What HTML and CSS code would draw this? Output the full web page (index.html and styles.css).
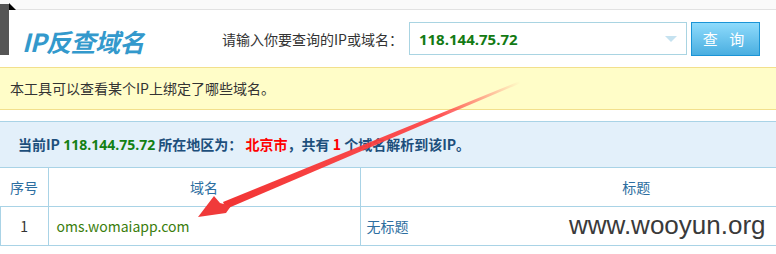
FILE: index.html
```html
<!DOCTYPE html>
<html lang="zh-CN">
<head>
    <meta charset="UTF-8">
    <title>IP反查域名</title>
    <link rel="stylesheet" href="styles.css">
</head>
<body>

    <div class="corner">
        <svg width="18" height="56" viewBox="0 0 18 56">
            <rect x="0" y="4" width="9" height="51" fill="#555"/>
            <polygon points="9,3 9,10 16,10" fill="#000"/>
        </svg>
    </div>

    <div class="topline"></div>

    <div class="header">
        <h1 class="logo">IP反查域名</h1>
        <label class="label">请输入你要查询的IP或域名：</label>
        <div class="search">
            <span class="search-value">118.144.75.72</span>
            <span class="caret"></span>
        </div>
        <button class="btn-query">查 询</button>
    </div>

    <div class="notice">本工具可以查看某个IP上绑定了哪些域名。</div>

    <div class="info">
        当前IP <span class="green">118.144.75.72</span> 所在地区为： <span class="red">北京市</span>，共有 <span class="red">1</span> 个域名解析到该IP。
    </div>

    <table class="result">
        <tr>
            <th class="col-no">序号</th>
            <th class="col-domain">域名</th>
            <th class="col-title">标题</th>
        </tr>
        <tr>
            <td class="num">1</td>
            <td class="domain">oms.womaiapp.com</td>
            <td class="title">无标题</td>
        </tr>
    </table>

    <!-- 截图上的标注箭头 -->
    <svg class="arrow" width="776" height="254" viewBox="0 0 776 254">
        <defs>
            <linearGradient id="fade" x1="520" y1="82" x2="200" y2="216" gradientUnits="userSpaceOnUse">
                <stop offset="0" stop-color="#ff4040" stop-opacity="0"/>
                <stop offset="0.25" stop-color="#ff4040" stop-opacity="0.9"/>
                <stop offset="1" stop-color="#f03030"/>
            </linearGradient>
        </defs>
        <polygon points="520,81 521,83 226,209 223,202" fill="url(#fade)"/>
        <polygon points="198,217 214,196 220,203 231,206 226,213" fill="#f03a3a"/>
    </svg>

    <div class="watermark">www.wooyun.org</div>

</body>
</html>
```

FILE: styles.css
```css
body {
    margin: 0;
    width: 776px;
    height: 254px;
    overflow: hidden;
    position: relative;
    background: #fff;
    font-family: "Microsoft YaHei", "Noto Sans CJK SC", sans-serif;
    color: #333;
}

.corner {
    position: absolute;
    left: 0;
    top: 0;
}

.topline {
    height: 9px;
    border-bottom: 1px solid #e2e2e2;
    background: #fafafa;
}

.header {
    display: flex;
    align-items: center;
    height: 57px;
    padding-left: 22px;
}

.logo {
    margin: 0;
    width: 200px;
    font-size: 25px;
    font-style: italic;
    font-weight: bold;
    color: #3399cc;
    letter-spacing: -0.5px;
    line-height: 1;
    padding-top: 5px;
}

.label {
    font-size: 14px;
    color: #333;
    margin-right: 6px;
}

.search {
    box-sizing: border-box;
    width: 278px;
    height: 33px;
    border: 1px solid #a9d4e2;
    display: flex;
    align-items: center;
    justify-content: space-between;
    padding: 0 9px 0 9px;
}

.search-value {
    font-family: "Open Sans", sans-serif;
    font-weight: bold;
    font-size: 15px;
    color: #137a13;
}

.caret {
    width: 0;
    height: 0;
    border-left: 6px solid transparent;
    border-right: 6px solid transparent;
    border-top: 6px solid #c5e2f0;
}

.btn-query {
    box-sizing: border-box;
    width: 69px;
    height: 34px;
    margin-left: 4px;
    border: 1px solid #1a94d6;
    background: linear-gradient(#8edbfc, #4aaee0);
    color: #fff;
    font-family: inherit;
    font-size: 15px;
    letter-spacing: 4px;
    padding-left: 6px;
}

.notice {
    height: 41px;
    line-height: 41px;
    background: #fffdc8;
    border-top: 1px solid #f2e08c;
    border-bottom: 1px solid #f2e08c;
    padding-left: 10px;
    font-size: 14px;
    color: #333;
}

.info {
    margin-top: 11px;
    height: 45px;
    line-height: 45px;
    background: #e3f0fa;
    border-top: 1px solid #a9d3e6;
    border-bottom: 1px solid #a9d3e6;
    padding-left: 18px;
    font-size: 14px;
    font-weight: bold;
    color: #1d4f7c;
}

.green { color: #138013; font-family: "Open Sans", sans-serif; }
.red { color: #ff0000; }

.result {
    width: 100%;
    border-collapse: collapse;
    table-layout: fixed;
}

.result th,
.result td {
    border: 1px solid #a9d3e6;
    border-top: none;
    height: 38px;
    padding: 0;
    font-size: 14px;
}

.result th {
    font-weight: normal;
    color: #2d6ea0;
}

.result .col-no { width: 47px; border-left: none; }
.result .col-domain { width: 311px; }
.result .col-title { padding-left: 136px; border-right: none; }

.num { text-align: center; color: #333; }
.result .domain { padding-left: 8px; color: #3a7d0c; }
.result .title { padding-left: 6px; color: #2d6ea0; border-right: none; }

.arrow {
    position: absolute;
    left: 0;
    top: 0;
}

.watermark {
    position: absolute;
    left: 569px;
    top: 210px;
    font-family: "Liberation Sans", Arial, sans-serif;
    font-size: 26px;
    color: #3a3a3a;
}
```
